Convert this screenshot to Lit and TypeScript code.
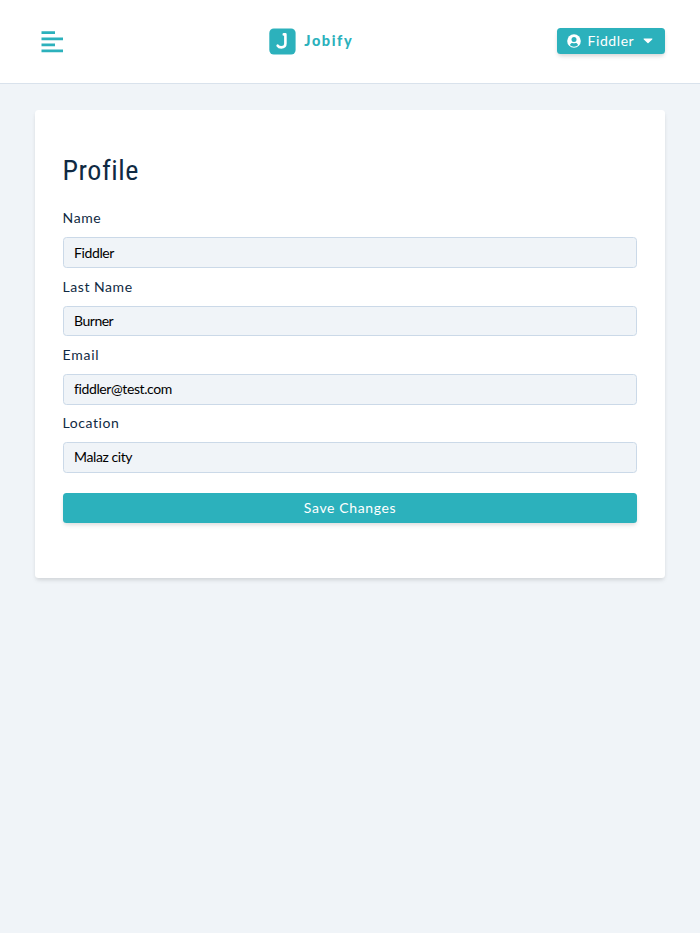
import { LitElement, html, css } from "lit";
import { customElement } from "lit/decorators.js";

interface Field {
  label: string;
  value: string;
  labelSpacing: number;
  valueSpacing: number;
}

const fields: Field[] = [
  { label: "Name", value: "Fiddler", labelSpacing: 0.6, valueSpacing: -0.4 },
  { label: "Last Name", value: "Burner", labelSpacing: 0.54, valueSpacing: -0.5 },
  { label: "Email", value: "fiddler@test.com", labelSpacing: 0.75, valueSpacing: -0.4 },
  { label: "Location", value: "Malaz city", labelSpacing: 0.55, valueSpacing: -0.42 },
];

@customElement("app-navbar")
export class AppNavbar extends LitElement {
  static styles = css`
    :host {
      display: flex;
      align-items: center;
      justify-content: space-between;
      box-sizing: border-box;
      height: 84px;
      padding: 0 35px;
      background: #fff;
      border-bottom: 1px solid #d9e2ec;
    }
    button {
      border: 0;
      padding: 0;
      background: none;
      font: inherit;
      color: inherit;
    }
    .toggle {
      width: 109px;
      display: flex;
      padding-left: 6px;
    }
    svg {
      display: block;
      flex: none;
    }
    .logo {
      display: flex;
      align-items: center;
      gap: 8px;
      width: 84px;
      margin-right: 78px;
      color: #2cb1bc;
    }
    .word {
      padding-bottom: 1px;
      font: 900 14.5px/26px Lato, sans-serif;
      letter-spacing: 1.6px;
    }
    .user {
      display: flex;
      align-items: center;
      box-sizing: border-box;
      width: 108.5px;
      height: 26px;
      margin-bottom: 1px;
      padding: 0 10.5px;
      border-radius: 3.5px;
      background: #2cb1bc;
      color: #fff;
      box-shadow: 0 3px 5px -1px rgba(0, 0, 0, 0.12), 0 2px 4px -1px rgba(0, 0, 0, 0.08);
    }
    .user-name {
      margin: 0 8.5px 0 6.5px;
      font-size: 14px;
      line-height: 26px;
      letter-spacing: 0.58px;
    }
  `;

  render() {
    return html`
      <button class="toggle" aria-label="Toggle menu">
        <svg width="22" height="22" viewBox="0 0 22 22" fill="#2cb1bc">
          <path d="M.5.300h13.500v2.800H.5zM.5 6.400h21.500v2.800H.5zM.5 12.400h13.500v2.800H.5zM.5 18.500h21.500v2.800H.5z" />
        </svg>
      </button>
      <div class="logo">
        <svg width="27" height="27" viewBox="0 0 27 27">
          <rect x=".3" y=".5" width="26.300" height="26" rx="4.500" fill="#2cb1bc" />
          <path d="M14.800 6.400h1.600v9.200c0 2.300-1.500 3.800-4.100 3.800-1.700 0-2.900-.6-3.600-1.700" fill="none" stroke="#fff" stroke-width="2.600" stroke-linecap="round" stroke-linejoin="round" />
        </svg>
        <span class="word">Jobify</span>
      </div>
      <button class="user">
        <svg width="14" height="14" viewBox="0 0 14 14">
          <circle cx="7" cy="7" r="6.800" fill="#fff" />
          <circle cx="7" cy="5.400" r="2.500" fill="#2cb1bc" />
          <path d="M2.900 11.100c.5-1.700 1.500-2.200 2.500-2.200.6.200 1 .3 1.600.3s1-.1 1.600-.3c1 0 2 .5 2.500 2.200C10 12.200 8.600 12.700 7 12.700s-3-.5-4.100-1.600z" fill="#2cb1bc" />
        </svg>
        <span class="user-name">Fiddler</span>
        <svg width="10" height="6" viewBox="0 0 10 6"><path d="M1.100.5h7.800c.5 0 .7.500.3.900L5.500 5.100a.7.700 0 0 1-1 0L.8 1.400C.4 1 .6.500 1.100.5z" fill="#fff" /></svg>
      </button>
    `;
  }
}

@customElement("profile-form")
export class ProfileForm extends LitElement {
  static styles = css`
    :host {
      display: block;
      box-sizing: border-box;
      height: 468px;
      padding: 43.5px 27.6px 0;
      border-radius: 3.5px;
      background: #fff;
      box-shadow: 0 3px 5px -1px rgba(0, 0, 0, 0.1), 0 2px 4px -1px rgba(0, 0, 0, 0.06);
    }
    h3 {
      margin: 0 0 21.5px;
      font: 400 28px/34px Roboto, sans-serif;
      font-stretch: 75%;
      letter-spacing: 0.5px;
      color: #102a43;
    }
    .row {
      height: 68.3px;
    }
    label {
      display: block;
      height: 28.2px;
      font-size: 14px;
      line-height: 17px;
      color: #102a43;
    }
    input {
      display: block;
      box-sizing: border-box;
      width: 100%;
      height: 30.6px;
      padding: 0 10.5px 1.4px;
      border: 1px solid #cbd9e8;
      border-radius: 3.5px;
      background: #f0f4f8;
      color: #000;
      font: inherit;
      font-size: 14px;
    }
    .save {
      display: block;
      width: 100%;
      height: 30.5px;
      margin-top: 10.5px;
      padding: 0 0 1.4px;
      border: 0;
      border-radius: 3.5px;
      background: #2cb1bc;
      color: #fff;
      font: inherit;
      font-size: 14px;
      letter-spacing: 0.62px;
      box-shadow: 0 3px 5px -1px rgba(0, 0, 0, 0.1), 0 2px 4px -1px rgba(0, 0, 0, 0.06);
    }
  `;

  render() {
    return html`
      <h3>Profile</h3>
      ${fields.map(
        (f) => html`<div class="row">
          <label><span style="letter-spacing:${f.labelSpacing}px">${f.label}</span></label>
          <input .value=${f.value} aria-label=${f.label} style="letter-spacing:${f.valueSpacing}px" />
        </div>`
      )}
      <button class="save">Save Changes</button>
    `;
  }
}

@customElement("app-root")
export class AppRoot extends LitElement {
  static styles = css`
    :host {
      display: block;
      min-height: 100vh;
      background: #f0f4f8;
      font-family: Lato, sans-serif;
    }
    main {
      padding: 26.3px 35px;
    }
  `;

  render() {
    return html`<app-navbar></app-navbar>
      <main><profile-form></profile-form></main>`;
  }
}
